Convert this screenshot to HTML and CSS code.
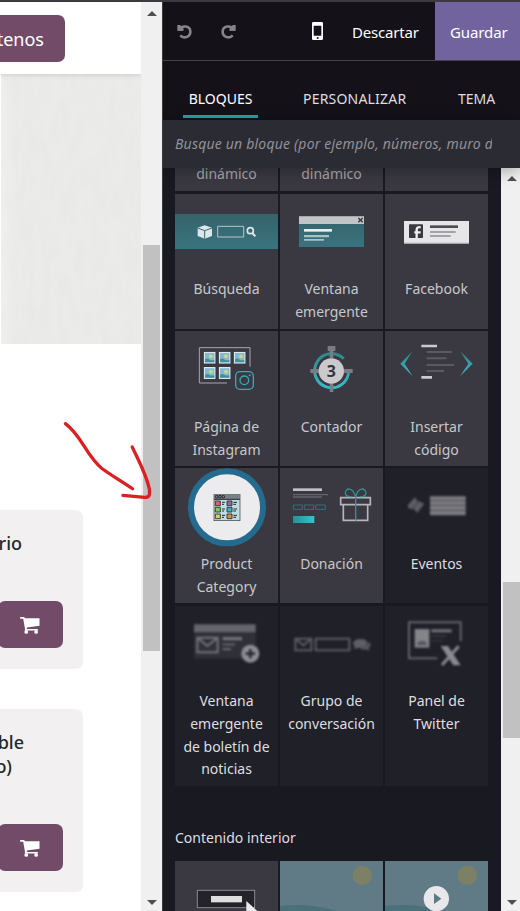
FILE: index.html
```html
<!DOCTYPE html>
<html lang="es">
<head>
<meta charset="utf-8">
<title>Editor de bloques</title>
<link rel="stylesheet" href="styles.css">
</head>
<body>
<svg class="defs" width="0" height="0">
  <defs>
    <linearGradient id="teal" x1="0" y1="0" x2="0" y2="1"><stop offset="0" stop-color="#36636a"/><stop offset="1" stop-color="#397380"/></linearGradient>
    <linearGradient id="cyan" x1="0" y1="0" x2="1" y2="0"><stop offset="0" stop-color="#2a8f96"/><stop offset="1" stop-color="#36c1d2"/></linearGradient>
    <linearGradient id="ring" x1="0" y1="0" x2="0" y2="1"><stop offset="0" stop-color="#2f8888"/><stop offset="1" stop-color="#3cb8c8"/></linearGradient>
    <symbol id="cart" viewBox="0 0 58 50"><path d="M0 0H12L14 4H57V26L20 31V35H52V40H14V33L9 5H0Z"/><circle cx="18" cy="44" r="5.500"/><circle cx="47" cy="44" r="5.500"/></symbol>
    <symbol id="thumb" viewBox="0 0 36 36"><path fill="#dbe9ee" d="M0 0h36v36H0z"/><path fill="#82b9cf" d="M4 4h28v28H4z"/><circle cx="22" cy="14" r="6" fill="#cbd68b"/><path fill="#438f9d" d="M4 23q8-5 14 1 7 3 14 0v8H4z"/></symbol>
    <filter id="paper"><feTurbulence type="fractalNoise" baseFrequency=".12 .035" numOctaves="4" seed="8"/><feColorMatrix values="0 0 0 0 .5  0 0 0 0 .5  0 0 0 0 .48  .12 0 0 0 -.04"/></filter>
  </defs>
</svg>
<div class="app">
  <main class="site">
    <header class="site-header"><span class="contact">tenos</span></header>
    <div class="hero"><svg width="140" height="270"><rect width="140" height="270" filter="url(#paper)"/></svg></div>
    <article class="product"><h3>rio</h3><span class="buy"><svg width="20" height="17"><use href="#cart"/></svg></span></article>
    <article class="product tall"><h3>ble<br><span class="second">o)</span></h3><span class="buy"><svg width="20" height="17"><use href="#cart"/></svg></span></article>
  </main>
  <div class="scroll page-scroll"><i class="arrow up"></i><span class="bar"></span><i class="arrow down"></i></div>
  <aside class="panel">
    <div class="toolbar">
      <svg class="undo" viewBox="0 0 46 44" width="15" height="15"><path d="M7 2V16H20M8 15C17 2 40 4 41 22 41 40 20 45 10 34" fill="none" stroke="currentColor" stroke-width="8"/><path fill="currentColor" d="M1 1V20H20Z"/></svg>
      <svg class="undo redo" viewBox="0 0 46 44" width="15" height="15"><path d="M7 2V16H20M8 15C17 2 40 4 41 22 41 40 20 45 10 34" fill="none" stroke="currentColor" stroke-width="8"/><path fill="currentColor" d="M1 1V20H20Z"/></svg>
      <svg class="phone" viewBox="0 0 33 54" width="11" height="18"><path fill="#fff" fill-rule="evenodd" d="M4 0H29Q33 0 33 4V50Q33 54 29 54H4Q0 54 0 50V4Q0 0 4 0ZM5 11V41H28V11Z"/><circle cx="17" cy="48" r="3" fill="#141218"/></svg>
      <span class="discard">Descartar</span><span class="save">Guardar</span>
    </div>
    <nav class="tabs"><span class="tab on">BLOQUES</span><span class="tab custom">PERSONALIZAR</span><span class="tab">TEMA</span></nav>
    <div class="search"><span>Busque un bloque (por ejemplo, números, muro de precios)</span></div>
    <div class="body">
      <section class="blocks">
        <div class="grid">
          <div class="cell cut"><span>dinámico</span></div><div class="cell cut"><span>dinámico</span></div><div class="cell cut"></div>

          <div class="cell"><svg viewBox="15 27 309 252"><rect x="15" y="87" width="309" height="105" fill="url(#teal)"/><path fill="#dde7e9" d="M83 128 104 121 126 128V153L104 161 83 153Z"/><path d="M83 129 104 137 126 129M104 137V161" fill="none" stroke="#386770" stroke-width="3"/><path d="M143 124H221V156H143Z" fill="none" stroke="#b4c6ca" stroke-width="3"/><circle cx="241" cy="137" r="9" fill="none" stroke="#dde7e9" stroke-width="5"/><path d="M247 144 256 154" stroke="#dde7e9" stroke-width="6"/></svg><span>Búsqueda</span></div>
          <div class="cell"><svg viewBox="330 27 309 252"><path fill="url(#teal)" d="M387 94H582V186H387Z"/><path fill="#c3c4c8" d="M387 94H582V117H387Z"/><path d="M565 99 578 112M578 99 565 112" stroke="#34343c" stroke-width="4"/><path fill="#e8eff0" d="M402 132H486V140H402Z"/><path fill="#a9c2c5" d="M402 150H477V157H402ZM402 162H462V167H402Z"/></svg><span>Ventana<br>emergente</span></div>
          <div class="cell"><svg viewBox="645 27 309 252"><path fill="#e6e6e9" d="M702 108H897V177H702Z"/><path fill="#a5a5aa" d="M702 173H897V177H702Z"/><rect x="717" y="118" width="42" height="41" rx="2" fill="#383841"/><path d="M740 159V134Q740 125 752 127M733 142H752" fill="none" stroke="#eee" stroke-width="7"/><path fill="#4d4c55" d="M780 121H864V129H780Z"/><path fill="#a2a2a8" d="M780 138H857V144H780ZM780 150H842V156H780Z"/></svg><span>Facebook</span></div>

          <div class="cell"><svg viewBox="15 9 309 252"><path d="M240 116V59H88V165H171" fill="none" stroke="#a7a7ad" stroke-width="3"/><use href="#thumb" x="101" y="71" width="36" height="36"/><use href="#thumb" x="146" y="71" width="36" height="36"/><use href="#thumb" x="191" y="71" width="36" height="36"/><use href="#thumb" x="101" y="117" width="36" height="36"/><use href="#thumb" x="146" y="117" width="36" height="36"/><g fill="none" stroke="#3aa9b2" stroke-width="4"><rect x="197" y="131" width="53" height="53" rx="13"/><circle cx="223" cy="157" r="13"/></g><circle cx="239" cy="142" r="3" fill="#3aa9b2"/></svg><span>Página de<br>Instagram</span></div>
          <div class="cell"><svg viewBox="330 9 309 252"><path d="M521 92A51 51 0 1 0 536 129" fill="none" stroke="url(#ring)" stroke-width="9"/><path fill="#7b7b83" d="M473 54H496V69H490V91H479V69H473ZM421 123H447V135H421ZM521 123H548V135H521ZM479 166H490V192H479Z"/><circle cx="484" cy="129" r="38" fill="#cacacd"/><text class="three" x="484" y="147">3</text></svg><span>Contador</span></div>
          <div class="cell"><svg viewBox="645 9 309 252"><path fill="#c9c9ce" d="M754 50H801V58H754ZM754 144H786V152H754Z"/><path fill="#5b5a64" d="M770 69H845V75H770ZM770 88H830V94H770ZM770 108H852V114H770ZM770 126H822V132H770Z"/><path fill="url(#ring)" d="M727 70 691 107 728 145 704 107ZM871 70 908 107 870 145 895 107Z"/></svg><span>Insertar<br>código</span></div>

          <div class="cell"><svg viewBox="15 12 309 252"><circle cx="171" cy="130" r="108" fill="#ececee" stroke="#246b8d" stroke-width="18"/><rect x="132" y="91" width="78" height="79" fill="#bedce2" stroke="#333940" stroke-width="2"/><path fill="#777f88" d="M132 91H210V106H132Z"/><g fill="none" stroke="#25292f" stroke-width="3"><circle cx="140" cy="98" r="4"/><circle cx="150" cy="98" r="4"/><circle cx="160" cy="98" r="4"/><path d="M132 106H210M156 115H165M156 121H162M156 135H165M156 141H162M156 154H165M156 160H162M190 115H201M190 121H198M190 135H201M190 141H198M190 154H201M190 160H198"/></g><g stroke="#25292f" stroke-width="2.5"><path fill="#db626f" d="M136 111h15v14h-15z"/><path fill="#9663ac" d="M171 111h15v14h-15z"/><path fill="#7fcb4a" d="M136 130h15v14h-15z"/><path fill="#30b5c1" d="M171 130h15v14h-15z"/><path fill="#dacb62" d="M136 150h15v14h-15z"/><path fill="#d78b3d" d="M171 150h15v14h-15z"/></g></svg><span>Product<br>Category</span></div>
          <div class="cell"><svg viewBox="330 12 309 252"><path fill="#c0c0c4" d="M369 73H456V81H369Z"/><path fill="#65646c" d="M369 90H474V94H369ZM369 97H456V101H369Z"/><path d="M370 123H397V136H370ZM403 123H431V136H403ZM437 123H466V136H437Z" fill="none" stroke="#30737a" stroke-width="3"/><path fill="url(#cyan)" d="M369 156H433V177H369Z"/><path d="M512 101H601V122H512ZM520 122V169H593V122" fill="none" stroke="#b5b5ba" stroke-width="5"/><path d="M557 170V99C548 66 526 72 526 88Q528 98 544 98M557 99C565 66 588 72 588 88Q586 98 571 98" fill="none" stroke="#30958f" stroke-width="4"/></svg><span>Donación</span></div>
          <div class="cell off"><svg viewBox="645 12 309 252"><g class="soft"><path fill="#5f5e65" d="M714 122 736 99 739 109 763 119 741 147 735 137 714 132Z"/><path stroke="#34343c" stroke-width="3" d="M724 138 752 106"/><path fill="#7d7c83" d="M780 97H887V154H780Z"/><path stroke="#55545b" stroke-width="4" d="M780 110H887M780 124H887M780 139H887"/></g></svg><span>Eventos</span></div>

          <div class="cell off"><svg viewBox="15 18 309 252"><g class="soft"><path fill="#303039" d="M72 97H257V176H72Z"/><path fill="#66656d" d="M72 73H257V97H72Z"/><path d="M82 113H143V157H82ZM83 114 112 138 142 114" fill="none" stroke="#74737a" stroke-width="6"/><path fill="#74737a" d="M158 111H216V121H158ZM158 131H195V136H158ZM158 145H183V150H158Z"/><circle cx="241" cy="161" r="27" fill="#8d8c92"/><path d="M241 147V175M227 161H255" stroke="#2a2a31" stroke-width="8"/></g></svg><span>Ventana<br>emergente<br>de boletín de<br>noticias</span></div>
          <div class="cell off"><svg viewBox="330 18 309 252"><g class="soft"><path d="M376 116H424V151H376ZM377 117 400 136 423 117M437 116H538V151H437Z" fill="none" stroke="#5c5b62" stroke-width="6"/><ellipse cx="571" cy="130" rx="22" ry="13" fill="#5f5e66"/><path fill="#5f5e66" d="M557 139 549 147 570 143ZM598 126Q607 138 594 145L600 153 586 148Q574 150 570 145 594 143 598 126Z"/></g></svg><span>Grupo de<br>conversación</span></div>
          <div class="cell off"><svg viewBox="645 18 309 252"><g class="soft"><path d="M872 124V67H717V175H802" fill="none" stroke="#64636b" stroke-width="6"/><path fill="#85848a" d="M734 87H778V143H734Z"/><path fill="#57565e" d="M742 128Q756 116 770 128V136H742Z"/><path fill="#74737b" d="M784 88H845V97H784Z"/><path fill="#393841" d="M784 106H829V111H784ZM784 120H820V124H784Z"/><path fill="#8b8a91" d="M812 138H834L872 196H850Z"/><path d="M866 139 816 195" stroke="#8b8a91" stroke-width="9"/></g></svg><span>Panel de<br>Twitter</span></div>
        </div>
        <h2>Contenido interior</h2>
        <div class="grid inner">
          <div class="cell"><svg viewBox="45 183 309 150"><rect x="112" y="271" width="172" height="52" fill="#242329" stroke="#88888e" stroke-width="3"/><path fill="#dedee0" d="M153 288H246V307H153Z"/><path fill="#ececee" d="M259 303 292 333H259Z"/></svg></div>
          <div class="cell scene"><svg viewBox="360 183 309 150"><circle cx="607" cy="226" r="29" fill="#7c8064"/><path fill="#4a7179" d="M360 318Q447 308 530 333H360Z"/></svg></div>
          <div class="cell scene"><svg viewBox="675 183 309 150"><circle cx="922" cy="226" r="29" fill="#7c8064"/><path fill="#4a7179" d="M675 318Q762 308 845 333H675Z"/><circle cx="829" cy="296" r="38" fill="#e8e8ea"/><path fill="#5c7883" d="M822 280V312L844 296Z"/></svg></div>
        </div>
      </section>
      <div class="scroll block-scroll"><i class="arrow up"></i><span class="bar"></span><i class="arrow down"></i></div>
    </div>
  </aside>
</div>
<svg class="pointer" viewBox="0 0 525 280" width="175" height="93"><g fill="none" stroke="#d92124" stroke-width="10" stroke-linecap="round" stroke-linejoin="round"><path d="M196 20C245 56 259 117 306 155 333 175 365 193 398 216"/><path d="M397 90C420 139 440 174 449 218 451 236 448 242 435 242L369 236"/></g></svg>
</body>
</html>
```

FILE: styles.css
```css
* { box-sizing: border-box; }
body { margin: 0; width: 520px; height: 911px; overflow: hidden; font-family: "Noto Sans", "Open Sans", sans-serif; }
svg { display: block; }
.defs { position: absolute; }
.app { display: grid; grid-template-columns: 141px 21px 358px; height: 911px; border-top: 2px solid #3b3a3e; }
.site { background: #fff; overflow: hidden; height: 909px; }
.site-header { height: 72px; padding-top: 13px; background: #fff; box-shadow: 0 1px 5px #0002; position: relative; }
.contact, .buy { display: flex; align-items: center; background: #714b67; color: #fff; height: 47px; }
.contact { width: 65px; justify-content: flex-end; padding-right: 21px; font-size: 18px; border-radius: 0 7px 7px 0; }
.hero { height: 270px; margin-left: 1px; background: linear-gradient(90deg, #f0f0ee, #ebebe9 15px); margin-bottom: 166px; }
.product { width: 83px; height: 159px; background: #f2f0f1; border-radius: 0 7px 7px 0; margin-bottom: 40px; padding-top: 21px; display: flex; flex-direction: column; }
.product h3 { margin: 0; width: 22px; direction: rtl; white-space: nowrap; color: #25282b; font-size: 18px; font-weight: 500; line-height: 24px; flex: none; }
.product.tall h3 { width: 24px; direction: ltr; display: flex; flex-direction: column; align-items: flex-end; }
.product h3 br { display: none; }
.second { margin-right: 12px; }
.buy { width: 65px; margin: auto 0 21px -2px; border-radius: 7px; padding-left: 22px; padding-top: 2px; fill: #fff; }
.product.tall { height: 183px; }
.scroll { display: flex; flex-direction: column; align-items: center; background: #f0f0f0; }
.bar { background: #c1c1c1; width: 17px; }
.arrow { width: 0; height: 0; border: 5px solid transparent; flex: none; }
.up { border-top: 0; border-bottom-color: #505050; }
.down { border-bottom: 0; border-top-color: #505050; margin-top: auto; margin-bottom: 6px; }
.page-scroll .up { margin-top: 9px; }
.page-scroll .bar { height: 406px; margin-top: 229px; }
.panel { background: #191922; border-left: 1px solid #3b3a42; overflow: hidden; height: 909px; }
.toolbar { display: flex; align-items: center; height: 59px; background: #141218; border-bottom: 1px solid #444349; color: #fff; font-size: 15px; }
.undo { color: #858489; margin-left: 14px; }
.redo { transform: scaleX(-1); margin-left: 29px; }
.phone { margin-left: 76px; margin-bottom: 1px; }
.discard { margin-left: 29px; width: 68px; letter-spacing: -.2px; white-space: nowrap; }
.save { margin-left: 15px; flex: 1; align-self: stretch; background: #71639e; display: flex; align-items: center; padding-left: 15px; letter-spacing: -.1px; padding-top: 1px; }
.discard { padding-top: 1px; }
.tabs { height: 59px; background: #141218; display: flex; align-items: flex-end; font-size: 14px; color: #dedee0; white-space: nowrap; padding: 0 0 2px 20px; }
.tab { height: 30px; line-height: 21px; border-bottom: 3px solid transparent; letter-spacing: 0; }
.on { color: #fff; width: 75px; text-align: center; border-color: #18acb5; }
.custom { margin-left: 45px; width: 104px; letter-spacing: .2px; }
.custom + .tab { margin-left: 51px; }
.search { height: 48px; background: #2b2b33; padding: 0 28px 0 12px; font-size: 14px; letter-spacing: .2px; font-style: italic; color: #919197; line-height: 48px; position: relative; box-shadow: 0 2px 16px #0005; }
.search span { display: block; overflow: hidden; white-space: nowrap; }
.body { display: grid; grid-template-columns: 338px 19px; height: 743px; }
.blocks { padding: 0 12px; overflow: hidden; }
.grid { display: grid; grid-template-columns: repeat(3, 103px); grid-template-rows: 24px 135px 135px 136px 180px; gap: 2px; }
.cell { background: #3a3942; color: #c8c8cb; font-size: 14px; line-height: 22.8px; text-align: center; overflow: hidden; }
.cell:nth-child(n+10):nth-child(-n+12) { height: 135px; }
.cell > svg { width: 103px; height: 84px; }
.cell > span { display: block; white-space: nowrap; }
.cell:nth-child(n+7):nth-child(-n+12) > span { padding-top: 1px; }
.cut { height: 23px; color: #a8a8ad; }
.cut > span { margin-top: -5px; }
.cell.off { background: #202029; color: #dedee0; }
.soft { filter: blur(3.5px); }
.three { font: 700 48px "Noto Sans", sans-serif; fill: #35353d; text-anchor: middle; }
h2 { margin: 40px 0 12px; height: 23px; line-height: 23px; font-size: 14px; font-weight: 400; color: #dedee0; }
.inner { grid-template-rows: 50px; }
.inner .cell > svg { height: 50px; }
.inner .scene { background: #607a86; }
.block-scroll { padding-left: 2px; height: 743px; }
.block-scroll .up { margin-top: 8px; }
.block-scroll .bar { height: 156px; margin-top: 401px; }
.pointer { position: absolute; left: 0; top: 417px; }
```
